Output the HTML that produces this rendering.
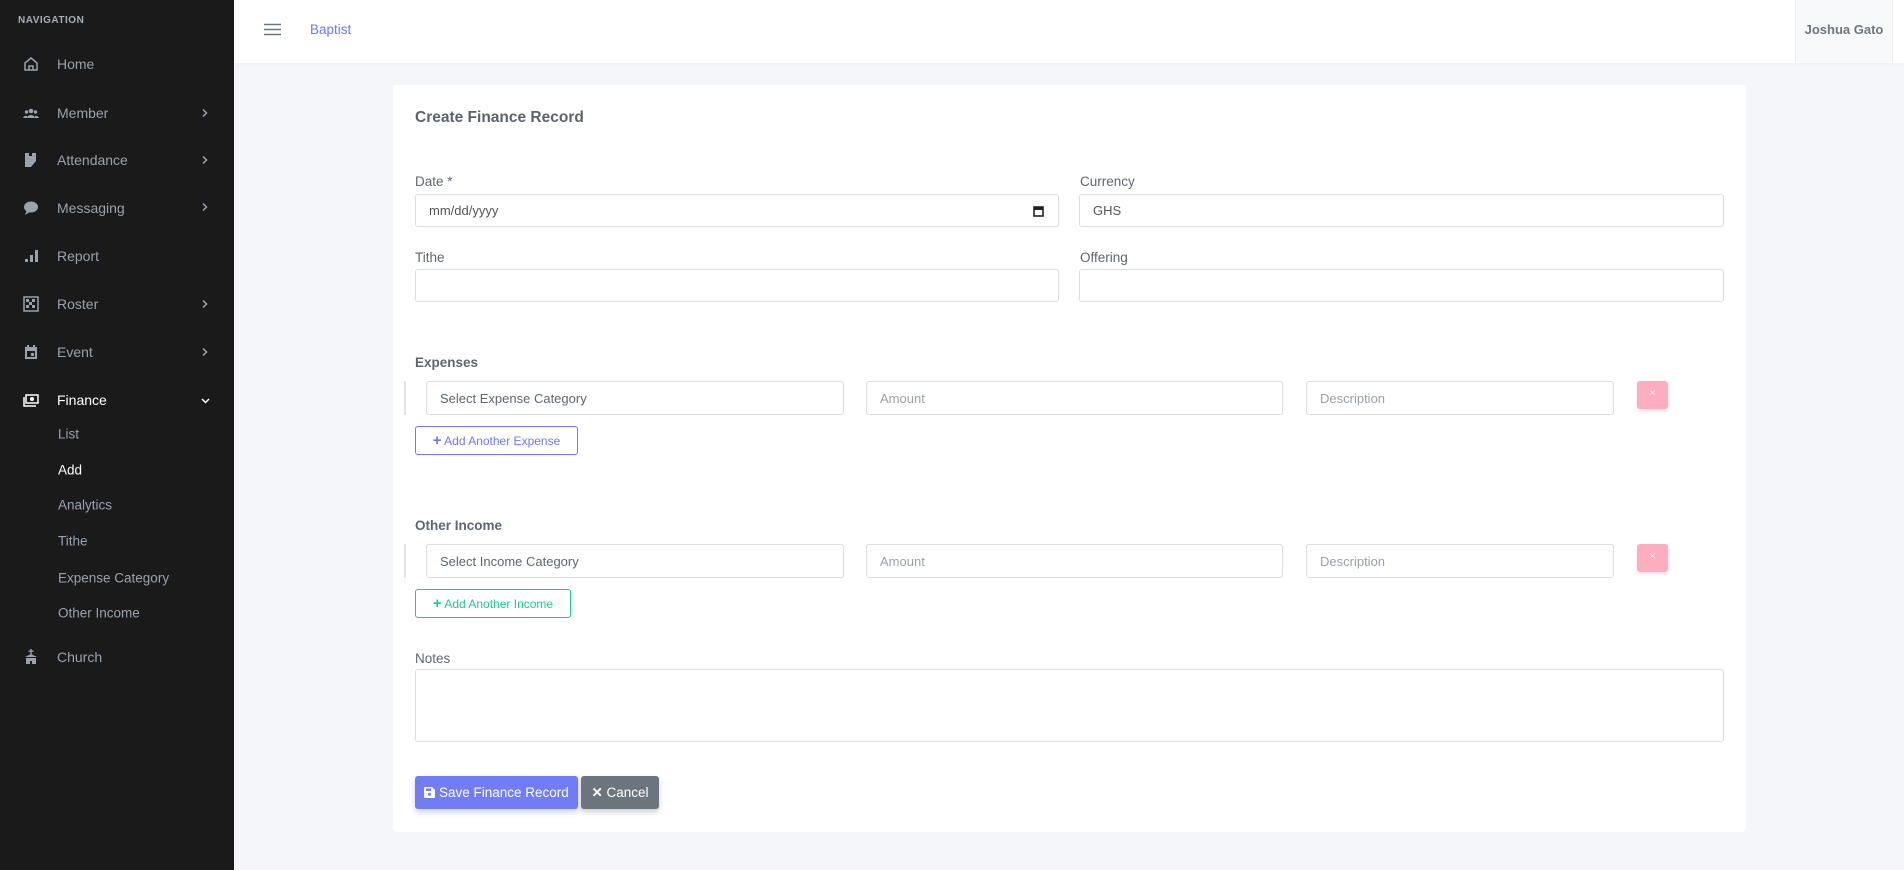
<!DOCTYPE html>
<html><head><meta charset="utf-8"><style>
*{box-sizing:border-box;margin:0;padding:0}
body{width:1904px;height:870px;overflow:hidden;background:#f5f6fa;font-family:"Liberation Sans",sans-serif;position:relative;color:#6c757d}
.side{position:absolute;left:0;top:0;width:234px;height:870px;background:#1a1a1b}
.nav-t{position:absolute;left:18px;top:15px;font-size:10px;font-weight:bold;letter-spacing:.5px;color:#a6adb7}
.it{position:absolute;left:57px;font-size:14px;color:#9aa2ad;transform:translateY(-50%)}
.ic{position:absolute;left:23px;width:16px;height:16px;transform:translateY(-50%)}
.ch{position:absolute;left:202px;width:6px;height:9px;transform:translateY(-50%)}
.sub{position:absolute;left:58px;font-size:13.5px;color:#9aa2ad;transform:translateY(-50%)}
.hdr{position:absolute;left:234px;top:0;right:0;height:63px;background:#fff;box-shadow:0 2px 6px rgba(0,0,0,.03)}
.user{position:absolute;right:11px;top:0;width:98px;height:63px;background:#f8f9fb;border-left:1px solid #eceef2;border-right:1px solid #eceef2;font-size:13px;font-weight:bold;color:#6c757d;text-align:center;line-height:60px}
.card{position:absolute;left:393px;top:85px;width:1353px;height:747px;background:#fff;border-radius:4px}
.a{position:absolute}
.lbl{position:absolute;font-size:13.5px;color:#5f6670}
.inp{position:absolute;border:1px solid #dcdde2;border-radius:3px;background:#fff;font-size:13px;color:#777d86;padding-left:13px;display:flex;align-items:center}
.x{position:absolute;width:31px;height:28px;background:#fcaebf;border-radius:3px;color:#fff;font-size:10px;text-align:center;line-height:26px;box-shadow:0 2px 4px rgba(252,100,130,.2)}
.bar{position:absolute;left:404px;width:2px;background:#e3e4e8}
</style></head><body>
<div class="side">
<div class="nav-t">NAVIGATION</div>
<svg class="ic" style="top:64px" viewBox="0 0 16 16"><path d="M2 7L8 2l6 5v7H2z M6 14v-4h4v4" fill="none" stroke="#9aa2ad" stroke-width="1.5"/></svg><div class="it" style="top:64px">Home</div>
<svg class="ic" style="top:113px" viewBox="0 0 16 16" fill="#9aa2ad"><circle cx="8" cy="6" r="2.3"/><circle cx="3.5" cy="7" r="1.7"/><circle cx="12.5" cy="7" r="1.7"/><path d="M4 13a4 3 0 0 1 8 0zM0 13a3 3 0 0 1 4-2v2zM16 13a3 3 0 0 0-4-2v2z"/></svg><div class="it" style="top:113px">Member</div><svg class="ch" style="top:113px" viewBox="0 0 6 9"><path d="M1 1l3.5 3.5L1 8" fill="none" stroke="#9aa2ad" stroke-width="1.5"/></svg>
<svg class="ic" style="top:160px" viewBox="0 0 16 16" fill="#9aa2ad"><path d="M2 1h4v3h3V1h4v8l-5 6H2z"/></svg><div class="it" style="top:160px">Attendance</div><svg class="ch" style="top:160px" viewBox="0 0 6 9"><path d="M1 1l3.5 3.5L1 8" fill="none" stroke="#9aa2ad" stroke-width="1.5"/></svg>
<svg class="ic" style="top:208px" viewBox="0 0 16 16" fill="#9aa2ad"><ellipse cx="8" cy="7" rx="7" ry="5.5"/><path d="M2 15l2-5 3 2z"/></svg><div class="it" style="top:208px">Messaging</div><svg class="ch" style="top:207px" viewBox="0 0 6 9"><path d="M1 1l3.5 3.5L1 8" fill="none" stroke="#9aa2ad" stroke-width="1.5"/></svg>
<svg class="ic" style="top:256px" viewBox="0 0 16 16" fill="#9aa2ad"><rect x="2" y="11" width="3" height="3"/><rect x="7" y="7" width="3" height="7"/><rect x="12" y="2" width="3" height="12"/></svg><div class="it" style="top:256px">Report</div>
<svg class="ic" style="top:304px" viewBox="0 0 16 16" fill="#9aa2ad"><rect x="1" y="1" width="14" height="14" fill="none" stroke="#9aa2ad" stroke-width="1.5"/><rect x="3" y="3" width="3" height="3"/><rect x="9" y="3" width="3" height="3"/><rect x="6" y="6" width="3" height="3"/><rect x="3" y="9" width="3" height="3"/><rect x="9" y="9" width="3" height="3"/></svg><div class="it" style="top:304px">Roster</div><svg class="ch" style="top:304px" viewBox="0 0 6 9"><path d="M1 1l3.5 3.5L1 8" fill="none" stroke="#9aa2ad" stroke-width="1.5"/></svg>
<svg class="ic" style="top:352px" viewBox="0 0 16 16" fill="#9aa2ad"><path d="M2 3h12v12H2z M4 7v6h8V7z" fill-rule="evenodd"/><rect x="4" y="1" width="2" height="3"/><rect x="10" y="1" width="2" height="3"/><rect x="8" y="9" width="3" height="3"/></svg><div class="it" style="top:352px">Event</div><svg class="ch" style="top:352px" viewBox="0 0 6 9"><path d="M1 1l3.5 3.5L1 8" fill="none" stroke="#9aa2ad" stroke-width="1.5"/></svg>
<svg class="ic" style="top:400px" viewBox="0 0 16 16"><rect x="3" y="3" width="12" height="8" fill="none" stroke="#fff" stroke-width="1.5"/><circle cx="9" cy="7" r="2" fill="#fff"/><path d="M1 5v9h12" fill="none" stroke="#fff" stroke-width="1.5"/></svg><div class="it" style="top:400px;color:#fff">Finance</div><svg class="ch" style="top:401px;left:201px;width:9px;height:6px" viewBox="0 0 9 6"><path d="M1 1l3.5 3.5L8 1" fill="none" stroke="#fff" stroke-width="1.5"/></svg>
<div class="sub" style="top:434px">List</div>
<div class="sub" style="top:470px;color:#fff">Add</div>
<div class="sub" style="top:505px">Analytics</div>
<div class="sub" style="top:541px">Tithe</div>
<div class="sub" style="top:578px">Expense Category</div>
<div class="sub" style="top:613px">Other Income</div>
<svg class="ic" style="top:657px" viewBox="0 0 16 16" fill="#9aa2ad"><rect x="7.3" y="0" width="1.4" height="5"/><rect x="5.5" y="1.5" width="5" height="1.3"/><path d="M2 8l6-3 6 3z"/><path d="M3 9h10v6H9v-3H7v3H3z"/></svg><div class="it" style="top:657px">Church</div>
</div>
<div class="hdr">
<svg class="a" style="left:30px;top:23px" width="17" height="13" viewBox="0 0 17 13"><path d="M0 1.5h17M0 6.5h17M0 11.5h17" stroke="#6c757d" stroke-width="1.6"/></svg>
<div class="a" style="left:76px;top:22px;font-size:13.5px;color:#7078f0">Baptist</div>
<div class="user">Joshua Gato</div>
</div>
<div class="card"></div>
<div class="a" style="left:415px;top:109px;font-size:15.5px;font-weight:bold;color:#5c636c">Create Finance Record</div>
<div class="lbl" style="left:415px;top:174px">Date *</div>
<div class="inp" style="left:415px;top:194px;width:644px;height:33px;color:#555">mm/dd/yyyy<svg class="a" style="right:14px;top:10px" width="11" height="12" viewBox="0 0 11 12"><rect x="1" y="2" width="9" height="9" fill="none" stroke="#222" stroke-width="1.6"/><rect x="1" y="2" width="9" height="3" fill="#222"/></svg></div>
<div class="lbl" style="left:1080px;top:174px">Currency</div>
<div class="inp" style="left:1079px;top:194px;width:645px;height:33px;color:#555">GHS</div>
<div class="lbl" style="left:415px;top:250px">Tithe</div>
<div class="inp" style="left:415px;top:269px;width:644px;height:33px"></div>
<div class="lbl" style="left:1080px;top:250px">Offering</div>
<div class="inp" style="left:1079px;top:269px;width:645px;height:33px"></div>
<div class="lbl" style="left:415px;top:355px;font-weight:bold">Expenses</div>
<div class="bar" style="top:381px;height:34px"></div>
<div class="inp" style="left:426px;top:381px;width:418px;height:34px;color:#5f6670">Select Expense Category</div>
<div class="inp" style="left:866px;top:381px;width:417px;height:34px;color:#9aa0a7">Amount</div>
<div class="inp" style="left:1306px;top:381px;width:308px;height:34px;color:#9aa0a7">Description</div>
<div class="x" style="left:1637px;top:381px">×</div>
<div class="a" style="left:415px;top:426px;width:163px;height:29px;border:1px solid #7078f0;border-radius:3px;color:#7078f0;font-size:12px;line-height:27px;text-align:center"><b style="font-size:15px">+</b> Add Another Expense</div>
<div class="lbl" style="left:415px;top:518px;font-weight:bold">Other Income</div>
<div class="bar" style="top:544px;height:34px"></div>
<div class="inp" style="left:426px;top:544px;width:418px;height:34px;color:#5f6670">Select Income Category</div>
<div class="inp" style="left:866px;top:544px;width:417px;height:34px;color:#9aa0a7">Amount</div>
<div class="inp" style="left:1306px;top:544px;width:308px;height:34px;color:#9aa0a7">Description</div>
<div class="x" style="left:1637px;top:544px">×</div>
<div class="a" style="left:415px;top:589px;width:156px;height:29px;border:1px solid #1fc98e;border-radius:3px;color:#1fc98e;font-size:12px;line-height:27px;text-align:center"><b style="font-size:15px">+</b> Add Another Income</div>
<div class="lbl" style="left:415px;top:651px">Notes</div>
<div class="inp" style="left:415px;top:669px;width:1309px;height:73px"></div>
<div class="a" style="left:415px;top:776px;width:163px;height:33px;background:#727cf5;border-radius:3px;color:#fff;font-size:13.5px;line-height:33px;text-align:center;box-shadow:0 3px 6px rgba(114,124,245,.35)"><svg width="11" height="11" viewBox="0 0 11 11" style="vertical-align:-1px"><path d="M0 1a1 1 0 0 1 1-1h7l3 3v7a1 1 0 0 1-1 1H1a1 1 0 0 1-1-1z" fill="#fff"/><rect x="2" y="1.5" width="5" height="2.5" fill="#727cf5"/><circle cx="5.5" cy="7.3" r="1.5" fill="#727cf5"/></svg> Save Finance Record</div>
<div class="a" style="left:581px;top:776px;width:78px;height:33px;background:#6c757d;border-radius:3px;color:#fff;font-size:13.5px;line-height:33px;text-align:center;box-shadow:0 3px 6px rgba(0,0,0,.2)"><b>✕</b> Cancel</div>
</body></html>
